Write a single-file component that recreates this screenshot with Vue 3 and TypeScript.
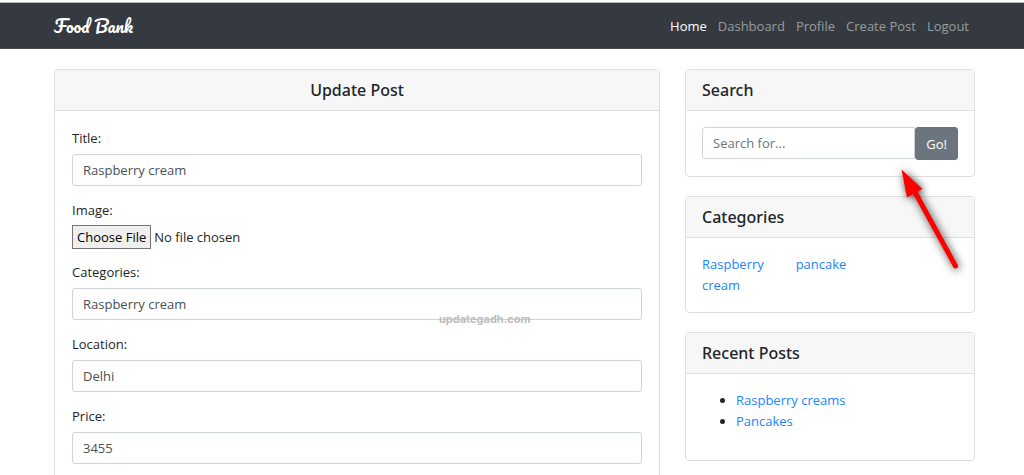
<script setup lang="ts">
import { ref } from 'vue'

interface NavItem {
  label: string
  active?: boolean
}

interface Field {
  id: string
  label: string
  value: string
  type: 'text' | 'file'
}

const navItems: NavItem[] = [
  { label: 'Home', active: true },
  { label: 'Dashboard' },
  { label: 'Profile' },
  { label: 'Create Post' },
  { label: 'Logout' },
]

const fields = ref<Field[]>([
  { id: 'title', label: 'Title:', value: 'Raspberry cream', type: 'text' },
  { id: 'image', label: 'Image:', value: '', type: 'file' },
  { id: 'categories', label: 'Categories:', value: 'Raspberry cream', type: 'text' },
  { id: 'location', label: 'Location:', value: 'Delhi', type: 'text' },
  { id: 'price', label: 'Price:', value: '3455', type: 'text' },
])

const query = ref('')
const categories: string[] = ['Raspberry cream', 'pancake']
const recentPosts: string[] = ['Raspberry creams', 'Pancakes']
</script>

<template>
  <div class="page">
    <header class="navbar">
      <a class="brand" href="#">Food Bank</a>
      <nav class="nav">
        <a
          v-for="item in navItems"
          :key="item.label"
          href="#"
          class="nav-link"
          :class="{ active: item.active }"
        >{{ item.label }}</a>
      </nav>
    </header>

    <div class="layout">
      <main class="card">
        <h1 class="card-header centered">Update Post</h1>
        <form class="card-body form" @submit.prevent>
          <div v-for="field in fields" :key="field.id" class="group" :class="field.type">
            <label :for="field.id">{{ field.label }}</label>
            <input v-if="field.type === 'file'" :id="field.id" type="file" class="file-input" />
            <input v-else :id="field.id" v-model="field.value" type="text" class="control" />
          </div>
        </form>
        <span class="watermark">updategadh.com</span>
      </main>

      <aside class="side">
        <section class="card">
          <h2 class="card-header">Search</h2>
          <form class="card-body search" @submit.prevent>
            <input v-model="query" type="text" class="control" placeholder="Search for..." aria-label="Search for" />
            <button type="submit" class="go">Go!</button>
          </form>
        </section>

        <section class="card">
          <h2 class="card-header">Categories</h2>
          <div class="card-body category-grid">
            <a v-for="name in categories" :key="name" href="#" class="link">{{ name }}</a>
          </div>
        </section>

        <section class="card">
          <h2 class="card-header">Recent Posts</h2>
          <div class="card-body">
            <ul class="posts">
              <li v-for="post in recentPosts" :key="post"><a href="#" class="link">{{ post }}</a></li>
            </ul>
          </div>
        </section>

        <svg class="arrow" width="90" height="130" viewBox="0 0 90 130" aria-hidden="true">
          <g class="arrow-shape">
            <path d="M31 45 L70.5 117" fill="none" stroke="#fe0000" stroke-width="5" stroke-linecap="round" />
            <path d="M16.5 20.5 L37.5 40 L22 48.5 Z" fill="#fe0000" />
          </g>
        </svg>
      </aside>
    </div>
  </div>
</template>

<style>
body {
  margin: 0;
  background: #fff;
}
</style>

<style scoped>
.page,
.page * {
  box-sizing: border-box;
}

.page {
  height: 100vh;
  padding-top: 2px;
  overflow-y: auto;
  scrollbar-width: none;
  font-family: 'Open Sans', 'Noto Sans', sans-serif;
  font-size: 13px;
  line-height: 20px;
  color: #212529;
}

.page a {
  text-decoration: none;
}

.navbar {
  display: flex;
  align-items: center;
  justify-content: space-between;
  height: 47px;
  padding: 0 55px 0 54px;
  background: #343a40;
  border-top: 1px solid #b4b5b8;
  border-bottom: 1px solid #4b4c57;
}

.brand {
  font-family: Pacifico, cursive;
  font-size: 17px;
  font-weight: 400;
  color: #fff;
}

.nav {
  display: flex;
  gap: 11px;
}

.nav-link {
  color: #999c9f;
}

.nav-link.active {
  color: #fff;
}

.layout {
  display: grid;
  grid-template-columns: minmax(0, 606fr) minmax(0, 290fr);
  gap: 25px;
  padding: 20px 49px 24px 54px;
}

.card {
  position: relative;
  border: 1px solid #dfdfdf;
  border-radius: 4px;
  background: #fff;
}

.card-header {
  margin: 0;
  padding: 10px 16px;
  font-family: 'Noto Sans', 'Open Sans', sans-serif;
  font-size: 16px;
  font-weight: 500;
  line-height: 20px;
  background: #f7f7f7;
  border-bottom: 1px solid #dfdfdf;
  border-radius: 3px 3px 0 0;
}

.centered {
  text-align: center;
}

.card-body {
  padding: 16px;
}

.form {
  padding: 17px;
}

.group {
  display: flex;
  flex-direction: column;
  gap: 6px;
  margin-bottom: 14px;
}

.group.file {
  gap: 5px;
  margin-bottom: 13px;
}

.control {
  width: 100%;
  min-width: 0;
  height: 32px;
  padding: 0 10px;
  font: inherit;
  color: #495057;
  background: #fff;
  border: 1px solid #ced4da;
  border-radius: 3px;
  outline: none;
}

.control::placeholder {
  color: #6c757d;
  opacity: 1;
}

.file-input {
  width: 100%;
  height: 24px;
  font: inherit;
  color: #212529;
}

.file-input::file-selector-button {
  height: 24px;
  margin: 0 3px 0 0;
  padding: 0 4px;
  font: inherit;
  color: #000;
  background: #efefef;
  border: 1px solid #767676;
  border-radius: 0;
}

.watermark {
  position: absolute;
  top: 239px;
  left: 384px;
  font-family: Inter, sans-serif;
  font-size: 11px;
  font-weight: 700;
  color: #bdbdbd;
}

.side {
  position: relative;
  display: flex;
  flex-direction: column;
  align-items: stretch;
  gap: 19px;
}

.search {
  display: flex;
}

.search .control {
  border-radius: 3px 0 0 3px;
}

.go {
  flex: none;
  height: 33px;
  padding: 0 10px;
  font: inherit;
  color: #fff;
  background: #6c757d;
  border: 1px solid #6c757d;
  border-radius: 3px;
}

.category-grid {
  display: grid;
  grid-template-columns: repeat(3, minmax(0, 1fr));
  column-gap: 25px;
  line-height: 21px;
}

.link {
  color: #2185fb;
}

.posts {
  margin: 0 0 12px;
  padding-left: 34px;
  line-height: 21px;
}

.arrow {
  position: absolute;
  top: 80px;
  right: 0;
  pointer-events: none;
}

.arrow-shape {
  filter: drop-shadow(1px 1px 4px rgba(0, 0, 0, 0.8));
}
</style>
